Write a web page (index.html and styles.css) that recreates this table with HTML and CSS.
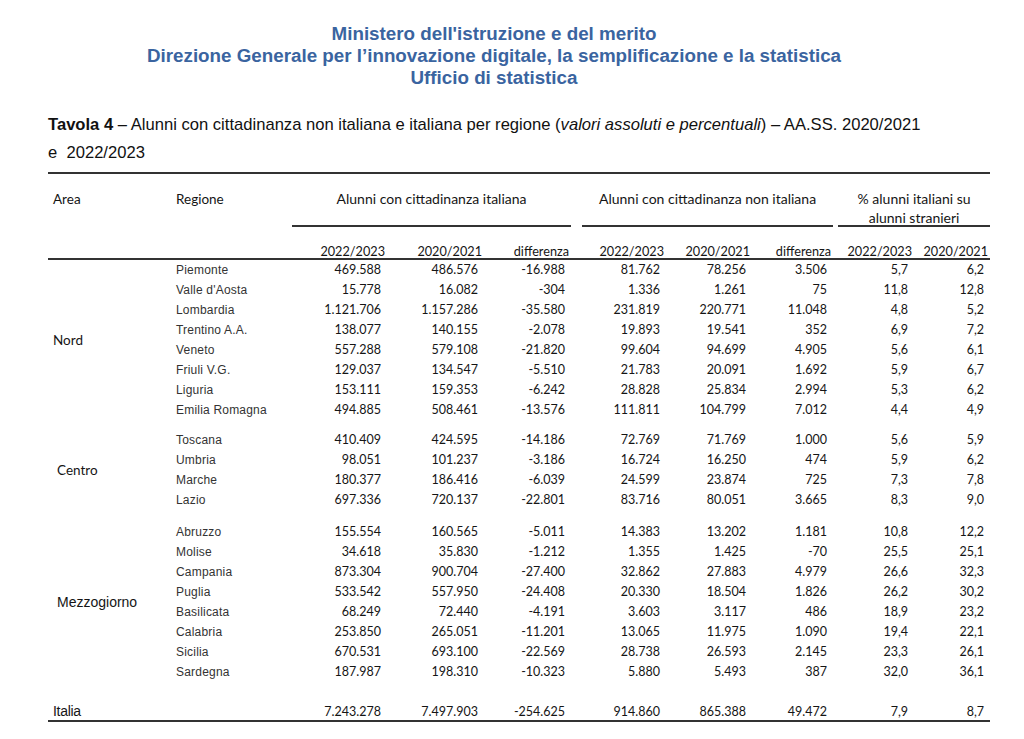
FILE: index.html
```html
<!DOCTYPE html>
<html lang="it">
<head>
<meta charset="utf-8">
<title>Tavola 4</title>
<link rel="stylesheet" href="styles.css">
</head>
<body>
<header class="masthead">
  <div>Ministero dell'istruzione e del merito</div>
  <div>Direzione Generale per l’innovazione digitale, la semplificazione e la statistica</div>
  <div>Ufficio di statistica</div>
</header>
<p class="caption"><b>Tavola 4</b> – Alunni con cittadinanza non italiana e italiana per regione (<i>valori assoluti e percentuali</i>) – AA.SS. 2020/2021<br>e&nbsp; 2022/2023</p>
<table class="data">
  <colgroup>
    <col class="c1"><col class="c2"><col class="c3"><col class="c4"><col class="c5">
    <col class="c6"><col class="c7"><col class="c8"><col class="c9"><col class="c10">
  </colgroup>
  <thead>
    <tr>
      <th class="h-area" rowspan="2">Area</th>
      <th class="h-area" rowspan="2">Regione</th>
      <th class="h-group" colspan="3"><div class="grp g1">Alunni con cittadinanza italiana</div></th>
      <th class="h-group" colspan="3"><div class="grp g2">Alunni con cittadinanza non italiana</div></th>
      <th class="h-group" colspan="2"><div class="grp g3">% alunni italiani su<br>alunni stranieri</div></th>
    </tr>
    <tr>
      <th class="h-sub">2022/2023</th><th class="h-sub">2020/2021</th><th class="h-sub">differenza</th>
      <th class="h-sub">2022/2023</th><th class="h-sub">2020/2021</th><th class="h-sub">differenza</th>
      <th class="h-sub">2022/2023</th><th class="h-sub">2020/2021</th>
    </tr>
  </thead>
  <tbody>
    <tr><td class="area" rowspan="8">Nord</td><td class="reg">Piemonte</td><td class="n">469.588</td><td class="n">486.576</td><td class="n">-16.988</td><td class="n">81.762</td><td class="n">78.256</td><td class="n">3.506</td><td class="n">5,7</td><td class="n">6,2</td></tr>
    <tr><td class="reg">Valle d'Aosta</td><td class="n">15.778</td><td class="n">16.082</td><td class="n">-304</td><td class="n">1.336</td><td class="n">1.261</td><td class="n">75</td><td class="n">11,8</td><td class="n">12,8</td></tr>
    <tr><td class="reg">Lombardia</td><td class="n">1.121.706</td><td class="n">1.157.286</td><td class="n">-35.580</td><td class="n">231.819</td><td class="n">220.771</td><td class="n">11.048</td><td class="n">4,8</td><td class="n">5,2</td></tr>
    <tr><td class="reg">Trentino A.A.</td><td class="n">138.077</td><td class="n">140.155</td><td class="n">-2.078</td><td class="n">19.893</td><td class="n">19.541</td><td class="n">352</td><td class="n">6,9</td><td class="n">7,2</td></tr>
    <tr><td class="reg">Veneto</td><td class="n">557.288</td><td class="n">579.108</td><td class="n">-21.820</td><td class="n">99.604</td><td class="n">94.699</td><td class="n">4.905</td><td class="n">5,6</td><td class="n">6,1</td></tr>
    <tr><td class="reg">Friuli V.G.</td><td class="n">129.037</td><td class="n">134.547</td><td class="n">-5.510</td><td class="n">21.783</td><td class="n">20.091</td><td class="n">1.692</td><td class="n">5,9</td><td class="n">6,7</td></tr>
    <tr><td class="reg">Liguria</td><td class="n">153.111</td><td class="n">159.353</td><td class="n">-6.242</td><td class="n">28.828</td><td class="n">25.834</td><td class="n">2.994</td><td class="n">5,3</td><td class="n">6,2</td></tr>
    <tr><td class="reg">Emilia Romagna</td><td class="n">494.885</td><td class="n">508.461</td><td class="n">-13.576</td><td class="n">111.811</td><td class="n">104.799</td><td class="n">7.012</td><td class="n">4,4</td><td class="n">4,9</td></tr>
    <tr class="gap gap-a"><td colspan="10"></td></tr>
    <tr><td class="area area-in" rowspan="4">Centro</td><td class="reg">Toscana</td><td class="n">410.409</td><td class="n">424.595</td><td class="n">-14.186</td><td class="n">72.769</td><td class="n">71.769</td><td class="n">1.000</td><td class="n">5,6</td><td class="n">5,9</td></tr>
    <tr><td class="reg">Umbria</td><td class="n">98.051</td><td class="n">101.237</td><td class="n">-3.186</td><td class="n">16.724</td><td class="n">16.250</td><td class="n">474</td><td class="n">5,9</td><td class="n">6,2</td></tr>
    <tr><td class="reg">Marche</td><td class="n">180.377</td><td class="n">186.416</td><td class="n">-6.039</td><td class="n">24.599</td><td class="n">23.874</td><td class="n">725</td><td class="n">7,3</td><td class="n">7,8</td></tr>
    <tr><td class="reg">Lazio</td><td class="n">697.336</td><td class="n">720.137</td><td class="n">-22.801</td><td class="n">83.716</td><td class="n">80.051</td><td class="n">3.665</td><td class="n">8,3</td><td class="n">9,0</td></tr>
    <tr class="gap gap-b"><td colspan="10"></td></tr>
    <tr><td class="area area-in area-arial" rowspan="8">Mezzogiorno</td><td class="reg">Abruzzo</td><td class="n">155.554</td><td class="n">160.565</td><td class="n">-5.011</td><td class="n">14.383</td><td class="n">13.202</td><td class="n">1.181</td><td class="n">10,8</td><td class="n">12,2</td></tr>
    <tr><td class="reg">Molise</td><td class="n">34.618</td><td class="n">35.830</td><td class="n">-1.212</td><td class="n">1.355</td><td class="n">1.425</td><td class="n">-70</td><td class="n">25,5</td><td class="n">25,1</td></tr>
    <tr><td class="reg">Campania</td><td class="n">873.304</td><td class="n">900.704</td><td class="n">-27.400</td><td class="n">32.862</td><td class="n">27.883</td><td class="n">4.979</td><td class="n">26,6</td><td class="n">32,3</td></tr>
    <tr><td class="reg">Puglia</td><td class="n">533.542</td><td class="n">557.950</td><td class="n">-24.408</td><td class="n">20.330</td><td class="n">18.504</td><td class="n">1.826</td><td class="n">26,2</td><td class="n">30,2</td></tr>
    <tr><td class="reg">Basilicata</td><td class="n">68.249</td><td class="n">72.440</td><td class="n">-4.191</td><td class="n">3.603</td><td class="n">3.117</td><td class="n">486</td><td class="n">18,9</td><td class="n">23,2</td></tr>
    <tr><td class="reg">Calabria</td><td class="n">253.850</td><td class="n">265.051</td><td class="n">-11.201</td><td class="n">13.065</td><td class="n">11.975</td><td class="n">1.090</td><td class="n">19,4</td><td class="n">22,1</td></tr>
    <tr><td class="reg">Sicilia</td><td class="n">670.531</td><td class="n">693.100</td><td class="n">-22.569</td><td class="n">28.738</td><td class="n">26.593</td><td class="n">2.145</td><td class="n">23,3</td><td class="n">26,1</td></tr>
    <tr><td class="reg">Sardegna</td><td class="n">187.987</td><td class="n">198.310</td><td class="n">-10.323</td><td class="n">5.880</td><td class="n">5.493</td><td class="n">387</td><td class="n">32,0</td><td class="n">36,1</td></tr>
    <tr class="gap gap-c"><td colspan="10"></td></tr>
  </tbody>
  <tfoot>
    <tr class="total"><td class="area area-arial">Italia</td><td></td><td class="n">7.243.278</td><td class="n">7.497.903</td><td class="n">-254.625</td><td class="n">914.860</td><td class="n">865.388</td><td class="n">49.472</td><td class="n">7,9</td><td class="n">8,7</td></tr>
  </tfoot>
</table>
</body>
</html>
```

FILE: styles.css
```css
html, body {
  margin: 0;
  padding: 0;
  background: #ffffff;
}

body {
  font-family: "Liberation Sans", Arial, sans-serif;
  color: #111111;
}

.masthead {
  width: 988px;
  padding-top: 23px;
  text-align: center;
  color: #3a64a0;
  font-family: "Liberation Sans Narrow", "Arial Narrow", "Liberation Sans", sans-serif;
  font-weight: 700;
  font-size: 18.8px;
  line-height: 22px;
}

.caption {
  margin: 22px 0 0 48px;
  font-family: "Liberation Sans Narrow", "Arial Narrow", "Liberation Sans", sans-serif;
  font-size: 16.6px;
  line-height: 28px;
  color: #111111;
}

.data {
  margin: 5px 0 0 48px;
  width: 942px;
  table-layout: fixed;
  border-collapse: separate;
  border-spacing: 0;
  border-top: 2px solid #333333;
  font-family: "Lato", "Open Sans", sans-serif;
  color: #151515;
}

.c1 { width: 124px; }
.c2 { width: 120px; }
.c3 { width: 95px; }
.c4 { width: 97px; }
.c5 { width: 87px; }
.c6 { width: 95px; }
.c7 { width: 86px; }
.c8 { width: 81px; }
.c9 { width: 81px; }
.c10 { width: 76px; }

.data th {
  font-weight: 400;
  font-size: 13.5px;
  padding: 0;
}

.h-area {
  text-align: left;
  vertical-align: top;
  padding: 16px 0 0 5px !important;
  line-height: 19px;
  border-bottom: 2px solid #333333;
}

.h-area + .h-area {
  padding-left: 4px !important;
}

.h-group {
  vertical-align: top;
}

.grp {
  height: 36px;
  padding-top: 15px;
  line-height: 19px;
  font-size: 14px;
  text-align: center;
  border-bottom: 2px solid #333333;
}

.g2 { margin-left: 11px; }
.g3 { margin-left: 5px; }

.data .h-sub {
  height: 31px;
  vertical-align: bottom;
  text-align: right;
  font-size: 12.7px;
  line-height: 14px;
  padding-right: 2px;
  border-bottom: 2px solid #333333;
}

.data td {
  padding: 0;
  height: 20px;
  line-height: 20px;
  white-space: nowrap;
}

.n {
  text-align: right;
  padding-right: 6px !important;
  font-size: 12.5px;
  font-variant-numeric: tabular-nums;
}

.reg {
  padding-left: 4px !important;
  font-family: "Liberation Sans", Arial, sans-serif;
  font-size: 12px;
  letter-spacing: 0.2px;
  color: #333333;
}

.area {
  padding-left: 5px !important;
  font-size: 13.5px;
  vertical-align: middle;
}

.area-in {
  padding-left: 9px !important;
}

.area-arial {
  font-family: "Liberation Sans", Arial, sans-serif;
  font-size: 14px;
}

.gap td { height: auto; line-height: 0; }
.gap-a td { height: 10px; }
.gap-b td { height: 12px; }
.gap-c td { height: 18px; }

.total td {
  height: 17px;
  line-height: 17px;
  padding-top: 3px;
  border-bottom: 2px solid #333333;
}

.total .area {
  padding-left: 5px !important;
  letter-spacing: -0.3px;
}
```
